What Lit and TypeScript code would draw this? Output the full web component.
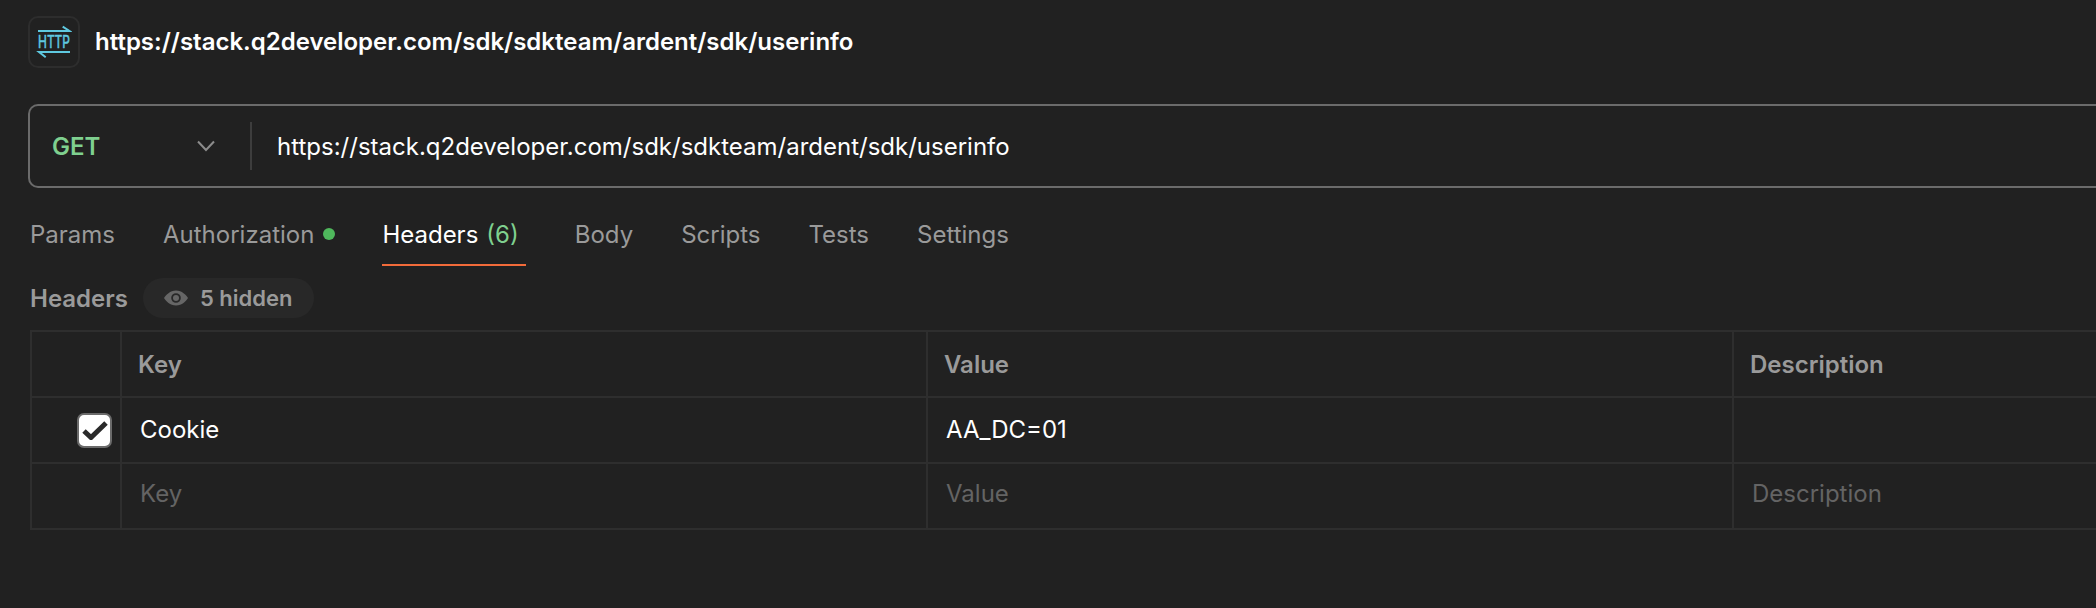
import { LitElement, html, css } from "lit";
import { customElement } from "lit/decorators.js";

@customElement("app-root")
export class AppRoot extends LitElement {
  static styles = css`
    :host { display: block; width: 2096px; height: 608px; background: #212121; overflow: hidden; font-family: Inter, "Liberation Sans", sans-serif; color: #fff; }
    .page { padding: 16px 0 0 28px; box-sizing: border-box; width: 2096px; }
    .title { display: flex; align-items: center; gap: 15px; height: 52px; }
    .logo { width: 52px; height: 52px; box-sizing: border-box; border: 2px solid #2d2d2d; border-radius: 10px; display: flex; align-items: center; justify-content: center; }
    .logo svg { display: block; }
    .title-text { font-size: 24px; font-weight: 600; padding-bottom: 2px; }
    .bar { margin-top: 36px; height: 84px; box-sizing: border-box; border: 2px solid #6b6b6b; border-right: none; border-radius: 10px 0 0 10px; display: flex; align-items: center; width: 2068px; }
    .method { width: 220px; box-sizing: border-box; padding-left: 22px; padding-right: 35px; display: flex; align-items: center; justify-content: space-between; color: #7fd08f; font-size: 24px; font-weight: 600; }
    .sep { width: 2px; height: 48px; background: #3d3d3d; }
    .url { padding-left: 25px; font-size: 24px; font-weight: 400; }
    .tabs { display: flex; margin-top: 26px; height: 52px; gap: 47px; padding-left: 1px; font-size: 24px; color: #9a9a9a; }
    .tab { display: flex; align-items: center; gap: 8px; padding: 0 0 10px 1px; box-sizing: border-box; height: 52px; border-bottom: 2px solid transparent; }
    .tab.active { color: #fff; border-bottom-color: #f26b3a; padding-left: 0; padding-right: 7px; margin-right: 1px; gap: 8px; }
    .count { color: #7fd08f; }
    .dot { width: 12px; height: 12px; border-radius: 50%; background: #4fb85c; margin-left: 1px; }
    .sub { display: flex; align-items: center; margin-top: 12px; height: 40px; padding-left: 2px; gap: 15px; font-weight: 600; color: #9a9a9a; }
    .sub-title { font-size: 24px; }
    .pill { display: flex; align-items: center; gap: 12px; height: 40px; padding: 0 21px; border-radius: 20px; background: #282828; font-size: 22px; }
    .table { margin: 12px 0 0 2px; display: grid; grid-template-columns: 90px 806px 806px 400px; grid-auto-rows: 66px; border-top: 2px solid #2e2e2e; border-left: 2px solid #2e2e2e; width: 2102px; font-size: 24px; }
    .cell { border-right: 2px solid #2e2e2e; border-bottom: 2px solid #2e2e2e; display: flex; align-items: center; padding: 0 0 2px 18px; box-sizing: border-box; }
    .cell.check { padding: 0 8px 0 0; justify-content: flex-end; }
    .cell.head { font-weight: 600; color: #9a9a9a; padding: 0 0 0 16px; }
    .cell.ph { color: #646464; padding-bottom: 6px; }
    .box { width: 35px; height: 35px; box-sizing: border-box; background: #fff; border: 2px solid #6b6b6b; border-radius: 7px; display: flex; align-items: center; justify-content: center; }
    .box svg { display: block; }
  `;

  render() {
    return html`<div class="page">
      <div class="title">
        <div class="logo">
          <svg width="36" height="36" viewBox="0 0 36 36" fill="none" stroke="#5fc9e0" stroke-width="2">
            <path d="M2 7H33.5L26.7 2.7" />
            <path d="M34 28H3L9.7 33.3" />
            <text transform="translate(2 24.3) scale(1 1.45)" textLength="32" lengthAdjust="spacingAndGlyphs" fill="#5fc9e0" stroke="#5fc9e0" stroke-width="0.4" font-family="Inter, sans-serif" font-size="12">HTTP</text>
          </svg>
        </div>
        <div class="title-text">https://stack.q2developer.com/sdk/sdkteam/ardent/sdk/userinfo</div>
      </div>
      <div class="bar">
        <div class="method">
          <span>GET</span>
          <svg width="18" height="12" viewBox="0 0 18 12" fill="none" stroke="#8c8c8c" stroke-width="2"><path d="M1 1.5L9 10L17 1.5" /></svg>
        </div>
        <div class="sep"></div>
        <div class="url">https://stack.q2developer.com/sdk/sdkteam/ardent/sdk/userinfo</div>
      </div>
      <div class="tabs">
        <div class="tab">Params</div>
        <div class="tab">Authorization<span class="dot"></span></div>
        <div class="tab active">Headers <span class="count">(6)</span></div>
        <div class="tab">Body</div>
        <div class="tab">Scripts</div>
        <div class="tab">Tests</div>
        <div class="tab">Settings</div>
      </div>
      <div class="sub">
        <div class="sub-title">Headers</div>
        <div class="pill">
          <svg width="24" height="16" viewBox="0 0 24 16"><path fill="#666" fill-rule="evenodd" d="M12 0.5C18 0.5 22 5 24 8C22 11 18 15.5 12 15.5C6 15.5 2 11 0 8C2 5 6 0.5 12 0.5ZM12 3.2A4.8 4.8 0 1 0 12 12.8A4.8 4.8 0 1 0 12 3.2Z"/><circle cx="12" cy="8" r="3" fill="#666"/></svg>
          <span>5 hidden</span>
        </div>
      </div>
      <div class="table">
        <div class="cell"></div><div class="cell head">Key</div><div class="cell head">Value</div><div class="cell head">Description</div>
        <div class="cell check"><div class="box"><svg width="26" height="20" viewBox="0 0 26 20" fill="none" stroke="#2a2a2a" stroke-width="5"><path d="M2 11L9 17.5L24 3" /></svg></div></div>
        <div class="cell">Cookie</div><div class="cell">AA_DC=01</div><div class="cell"></div>
        <div class="cell"></div><div class="cell ph">Key</div><div class="cell ph">Value</div><div class="cell ph">Description</div>
      </div>
    </div>`;
  }
}
